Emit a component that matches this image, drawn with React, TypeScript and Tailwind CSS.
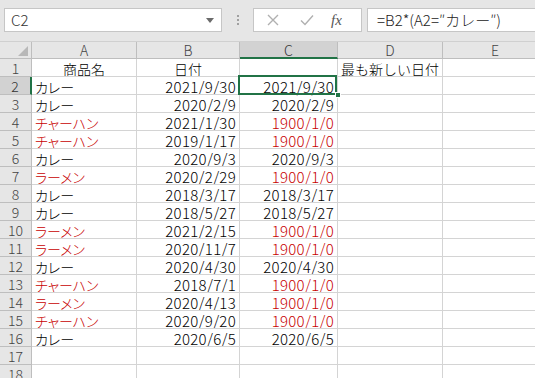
import React from 'react'

const RED = 'text-[#c80000]'

type Row = { a?: string; b?: string; c?: string; d?: string; red?: boolean; head?: boolean }

const rows: Row[] = [
  { a: '商品名', b: '日付', d: '最も新しい日付', head: true },
  { a: 'カレー', b: '2021/9/30', c: '2021/9/30' },
  { a: 'カレー', b: '2020/2/9', c: '2020/2/9' },
  { a: 'チャーハン', b: '2021/1/30', c: '1900/1/0', red: true },
  { a: 'チャーハン', b: '2019/1/17', c: '1900/1/0', red: true },
  { a: 'カレー', b: '2020/9/3', c: '2020/9/3' },
  { a: 'ラーメン', b: '2020/2/29', c: '1900/1/0', red: true },
  { a: 'カレー', b: '2018/3/17', c: '2018/3/17' },
  { a: 'カレー', b: '2018/5/27', c: '2018/5/27' },
  { a: 'ラーメン', b: '2021/2/15', c: '1900/1/0', red: true },
  { a: 'ラーメン', b: '2020/11/7', c: '1900/1/0', red: true },
  { a: 'カレー', b: '2020/4/30', c: '2020/4/30' },
  { a: 'チャーハン', b: '2018/7/1', c: '1900/1/0', red: true },
  { a: 'ラーメン', b: '2020/4/13', c: '1900/1/0', red: true },
  { a: 'チャーハン', b: '2020/9/20', c: '1900/1/0', red: true },
  { a: 'カレー', b: '2020/6/5', c: '2020/6/5' },
  {},
  {},
]

const cell = 'h-[18px] border-r border-b border-[#d4d4d4] flex items-center pt-[2px] px-[3px] overflow-hidden whitespace-nowrap leading-[16px] font-light'
const num = 'text-[15px] tracking-[0.3px]'
const hdr = 'h-[18px] bg-[#e6e6e6] border-r border-b border-[#bebebe] flex items-center justify-center text-[#444] leading-[16px] pt-[1px] font-light'

export default function App() {
  return (
    <div className="w-[535px] h-[378px] overflow-hidden bg-white text-[14px] text-black font-['Noto_Sans_CJK_JP',sans-serif]">
      {/* formula bar */}
      <div className="h-[42px] bg-[#e6e6e6] flex items-start pt-[8px] pl-[4px] border-b border-[#d0d0d0]">
        <div className="w-[218px] h-[24px] bg-white border border-[#c6c6c6] flex items-center justify-between pl-[6px] pr-[7px]">
          <span className="text-[15px] text-[#333] font-light">C2</span>
          <svg width="8" height="5" viewBox="0 0 8 5">
            <path d="M0 0h8L4 5z" fill="#6b6b6b" />
          </svg>
        </div>
        <div className="w-[31px] h-[24px] flex flex-col items-center justify-center gap-[2px]">
          <span className="w-[2px] h-[2px] bg-[#a0a0a0]" />
          <span className="w-[2px] h-[2px] bg-[#a0a0a0]" />
          <span className="w-[2px] h-[2px] bg-[#a0a0a0]" />
        </div>
        <div className="w-[109px] h-[24px] bg-white border border-[#c6c6c6] flex items-center">
          <svg width="12" height="12" viewBox="0 0 12 12" className="ml-[13px]">
            <path d="M1 1l10 10M11 1L1 11" stroke="#b0b0b0" strokeWidth="1.4" />
          </svg>
          <svg width="14" height="12" viewBox="0 0 14 12" className="ml-[21px]">
            <path d="M1 6.5l4 4L13 1.5" stroke="#b0b0b0" strokeWidth="1.4" fill="none" />
          </svg>
          <span className="ml-[17px] text-[15px] italic font-['Liberation_Serif',serif] text-[#555]">fx</span>
        </div>
        <div className="ml-[5px] flex-1 h-[24px] bg-white border border-r-0 border-[#c6c6c6] flex items-center pl-[9px]">
          <span className="text-[15px] text-[#222] whitespace-nowrap font-light">=B2*(A2=″カレー″)</span>
        </div>
      </div>

      {/* sheet */}
      <div className="grid grid-cols-[32px_105px_103px_98px_105px_105px] w-[548px]">
        <div className="h-[17px] bg-[#e6e6e6] border-r border-b border-[#bebebe] flex items-end justify-end pr-[3px] pb-[2px]">
          <svg width="10" height="10" viewBox="0 0 10 10">
            <path d="M10 0v10H0z" fill="#b8b8b8" />
          </svg>
        </div>
        {['A', 'B', 'C', 'D', 'E'].map((l) => (
          <div
            key={l}
            className={
              l === 'C'
                ? 'h-[17px] bg-[#d2d2d2] border-r border-b-2 border-r-[#bebebe] border-b-[#217346] flex items-center justify-center text-[#333] leading-[16px] font-light'
                : 'h-[17px] bg-[#e6e6e6] border-r border-b border-[#bebebe] flex items-center justify-center text-[#444] leading-[16px] font-light'
            }
          >
            {l}
          </div>
        ))}

        {rows.map((r, i) => {
          const n = i + 1
          return (
            <React.Fragment key={n}>
              <div
                className={
                  n === 2
                    ? 'h-[18px] bg-[#d2d2d2] border-b border-[#bebebe] border-r-2 border-r-[#217346] flex items-center justify-center text-[#333] leading-[16px] pt-[1px] font-light'
                    : hdr
                }
              >
                {n}
              </div>
              <div className={`${cell} ${r.head ? 'justify-center' : ''} ${r.red ? RED : ''} [font-feature-settings:'palt']`}>
                {r.a}
              </div>
              <div className={`${cell} ${r.head ? 'justify-center' : `justify-end ${num}`}`}>{r.b}</div>
              <div className={`${cell} ${num} justify-end ${r.red ? RED : ''} ${n === 2 ? 'relative overflow-visible' : ''}`}>
                {r.c}
                {n === 2 && (
                  <>
                    <div className="absolute left-[-2px] top-[-2px] w-[99px] h-[20px] border-2 border-[#217346]" />
                    <div className="absolute right-[-4px] bottom-[-4px] w-[6px] h-[6px] bg-[#217346] border border-white" />
                  </>
                )}
              </div>
              <div className={cell}>{r.d}</div>
              <div className={cell} />
            </React.Fragment>
          )
        })}
      </div>
    </div>
  )
}
